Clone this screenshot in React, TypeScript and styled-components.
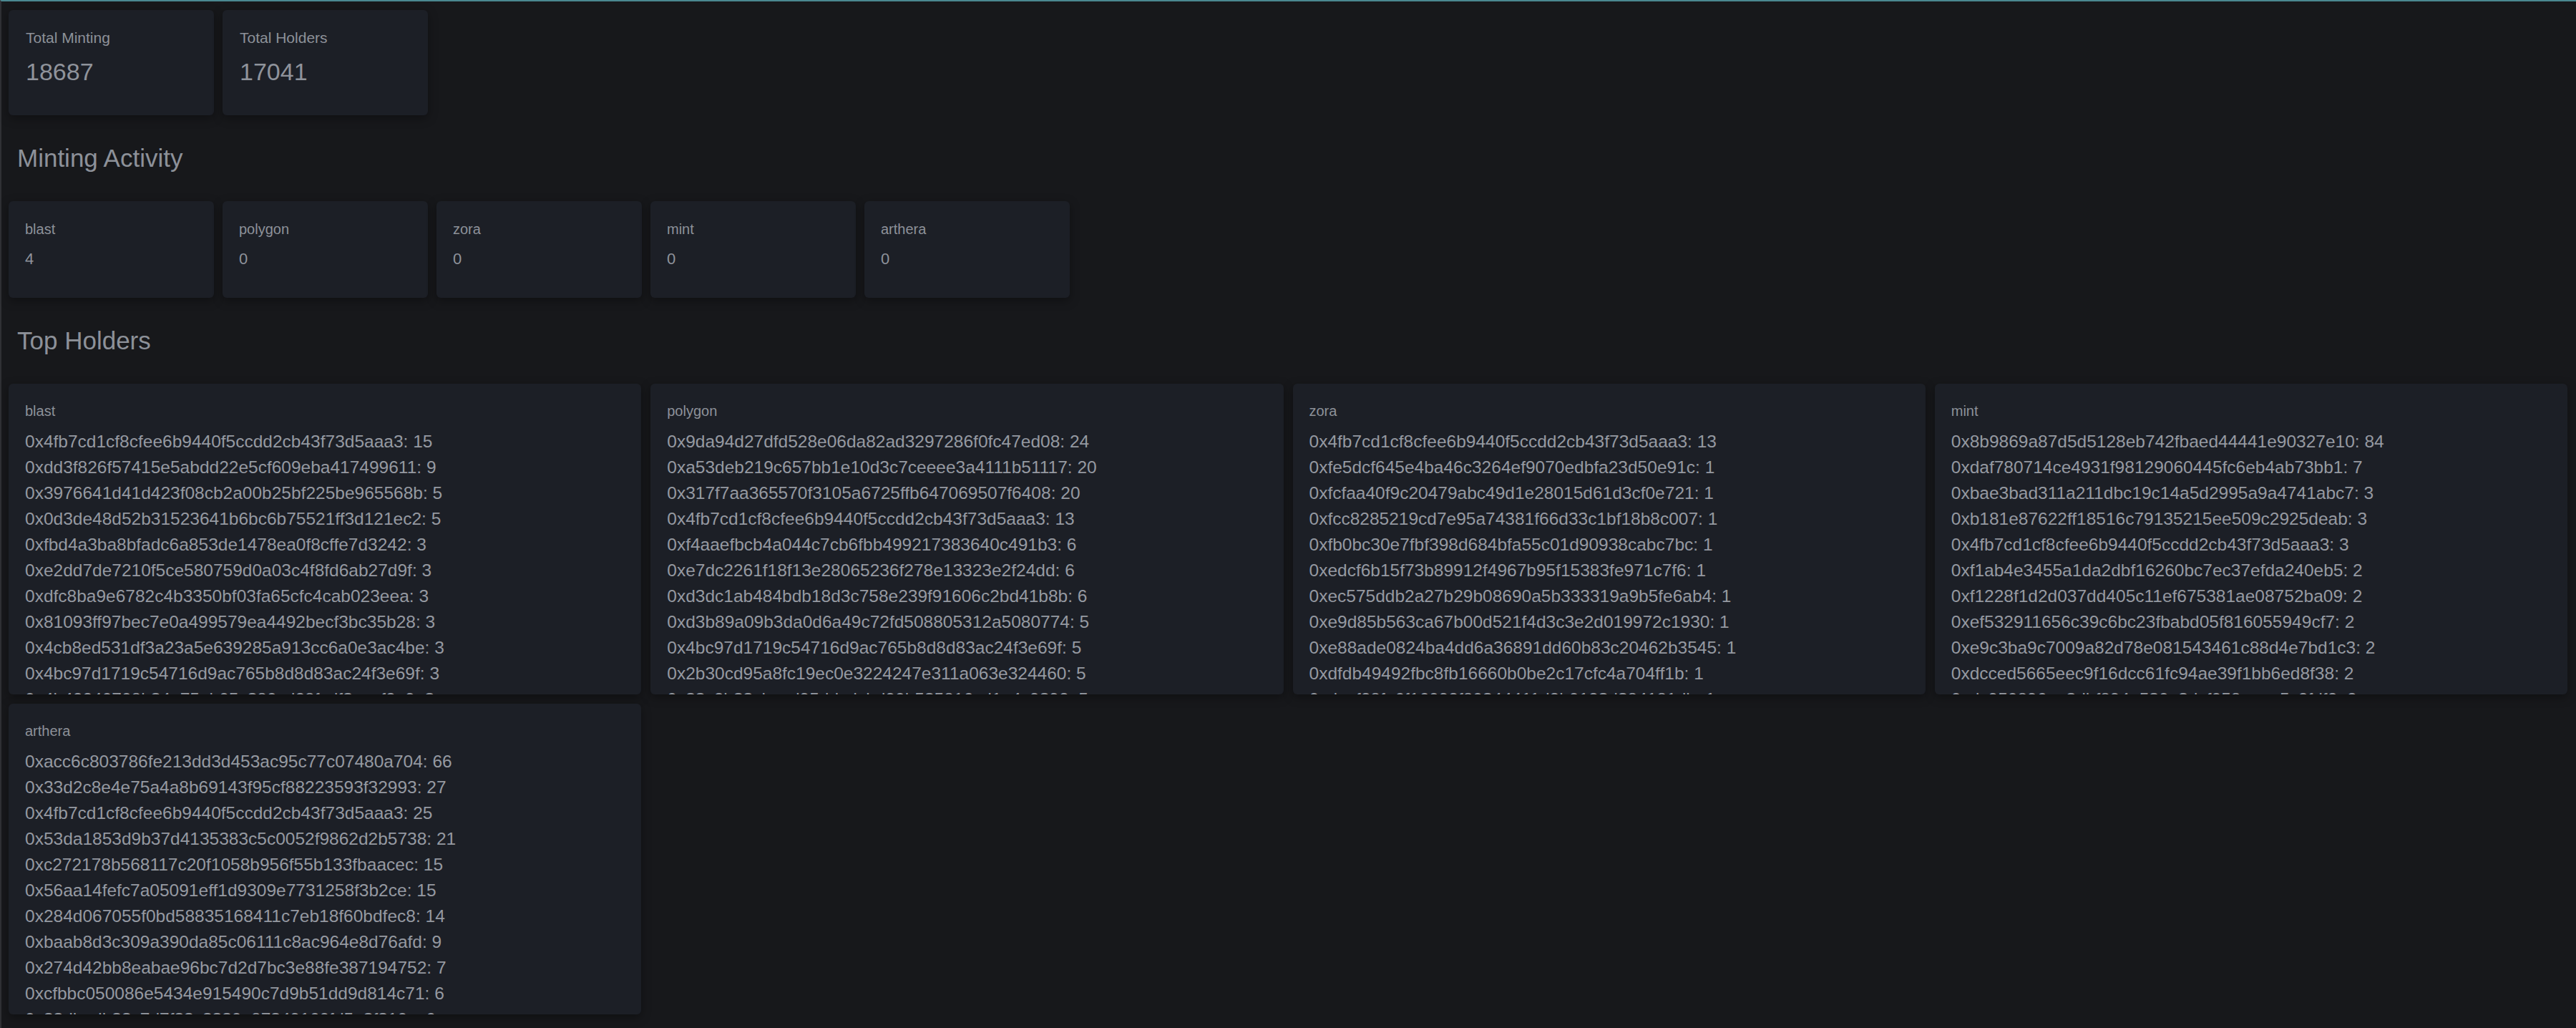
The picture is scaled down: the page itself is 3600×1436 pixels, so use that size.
import React from "react";
import styled, { createGlobalStyle } from "styled-components";

const GlobalStyle = createGlobalStyle`
  html, body {
    margin: 0;
    padding: 0;
    background: #17181b;
  }
  body {
    font-family: "Liberation Sans", Arial, Helvetica, sans-serif;
    color: #8d9199;
  }
  * { box-sizing: border-box; }
`;

const Page = styled.div`
  min-height: 100vh;
  background: #17181b;
  border-top: 2px solid #4a8891;
  border-left: 2px solid #303135;
  padding: 12px 12px 19px 10px;
`;

const CardRow = styled.div`
  display: flex;
  flex-wrap: wrap;
  gap: 12px;
`;

const Card = styled.div`
  background: #1c1f26;
  border-radius: 6px;
  box-shadow: 0 4px 14px rgba(0, 0, 0, 0.35);
`;

const StatCard = styled(Card)`
  width: 287px;
  padding: 27px 24px 41px;
  display: flex;
  flex-direction: column;
  gap: 16px;
`;

const StatLabel = styled.div`
  font-size: 21px;
  line-height: 24px;
  color: #8d9199;
`;

const StatValue = styled.div`
  font-size: 34px;
  line-height: 39px;
  color: #8f939b;
`;

const SectionTitle = styled.h2`
  margin: 40px 0 40px 12px;
  font-size: 35px;
  line-height: 40px;
  font-weight: 400;
  color: #8d9199;
`;

const ChainCard = styled(Card)`
  width: 287px;
  padding: 28px 23px 42px;
  display: flex;
  flex-direction: column;
  gap: 17px;
`;

const ChainLabel = styled.div`
  font-size: 20px;
  line-height: 23px;
  color: #8d9199;
`;

const ChainValue = styled.div`
  font-size: 22px;
  line-height: 25px;
  color: #8f939b;
`;

const HolderGrid = styled.div`
  display: grid;
  grid-template-columns: repeat(4, 1fr);
  gap: 13px;
`;

const HolderCard = styled(Card)`
  height: 434px;
  overflow: hidden;
  padding: 27px 23px 0;
`;

const HolderLabel = styled.div`
  font-size: 20px;
  line-height: 23px;
  margin-bottom: 13px;
  color: #8d9199;
`;

const HolderLine = styled.div`
  font-size: 24.5px;
  line-height: 36px;
  white-space: nowrap;
  color: #9599a1;
`;

const stats = [
  { label: "Total Minting", value: "18687" },
  { label: "Total Holders", value: "17041" },
];

const chains = [
  { label: "blast", value: "4" },
  { label: "polygon", value: "0" },
  { label: "zora", value: "0" },
  { label: "mint", value: "0" },
  { label: "arthera", value: "0" },
];

const holders: { chain: string; rows: [string, number][] }[] = [
  {
    chain: "blast",
    rows: [
      ["0x4fb7cd1cf8cfee6b9440f5ccdd2cb43f73d5aaa3", 15],
      ["0xdd3f826f57415e5abdd22e5cf609eba417499611", 9],
      ["0x3976641d41d423f08cb2a00b25bf225be965568b", 5],
      ["0x0d3de48d52b31523641b6bc6b75521ff3d121ec2", 5],
      ["0xfbd4a3ba8bfadc6a853de1478ea0f8cffe7d3242", 3],
      ["0xe2dd7de7210f5ce580759d0a03c4f8fd6ab27d9f", 3],
      ["0xdfc8ba9e6782c4b3350bf03fa65cfc4cab023eea", 3],
      ["0x81093ff97bec7e0a499579ea4492becf3bc35b28", 3],
      ["0x4cb8ed531df3a23a5e639285a913cc6a0e3ac4be", 3],
      ["0x4bc97d1719c54716d9ac765b8d8d83ac24f3e69f", 3],
      ["0x4b42240708b34a75eb05c380cd28fcdf3eacf2a9", 3],
    ],
  },
  {
    chain: "polygon",
    rows: [
      ["0x9da94d27dfd528e06da82ad3297286f0fc47ed08", 24],
      ["0xa53deb219c657bb1e10d3c7ceeee3a4111b51117", 20],
      ["0x317f7aa365570f3105a6725ffb647069507f6408", 20],
      ["0x4fb7cd1cf8cfee6b9440f5ccdd2cb43f73d5aaa3", 13],
      ["0xf4aaefbcb4a044c7cb6fbb499217383640c491b3", 6],
      ["0xe7dc2261f18f13e28065236f278e13323e2f24dd", 6],
      ["0xd3dc1ab484bdb18d3c758e239f91606c2bd41b8b", 6],
      ["0xd3b89a09b3da0d6a49c72fd508805312a5080774", 5],
      ["0x4bc97d1719c54716d9ac765b8d8d83ac24f3e69f", 5],
      ["0x2b30cd95a8fc19ec0e3224247e311a063e324460", 5],
      ["0x33c2b33cbcad95ddcdcbd90b535816cd1a4c9392", 5],
    ],
  },
  {
    chain: "zora",
    rows: [
      ["0x4fb7cd1cf8cfee6b9440f5ccdd2cb43f73d5aaa3", 13],
      ["0xfe5dcf645e4ba46c3264ef9070edbfa23d50e91c", 1],
      ["0xfcfaa40f9c20479abc49d1e28015d61d3cf0e721", 1],
      ["0xfcc8285219cd7e95a74381f66d33c1bf18b8c007", 1],
      ["0xfb0bc30e7fbf398d684bfa55c01d90938cabc7bc", 1],
      ["0xedcf6b15f73b89912f4967b95f15383fe971c7f6", 1],
      ["0xec575ddb2a27b29b08690a5b333319a9b5fe6ab4", 1],
      ["0xe9d85b563ca67b00d521f4d3c3e2d019972c1930", 1],
      ["0xe88ade0824ba4dd6a36891dd60b83c20462b3545", 1],
      ["0xdfdb49492fbc8fb16660b0be2c17cfc4a704ff1b", 1],
      ["0xdcef28fe6f16092f80344411d2b0123d384181db", 1],
    ],
  },
  {
    chain: "mint",
    rows: [
      ["0x8b9869a87d5d5128eb742fbaed44441e90327e10", 84],
      ["0xdaf780714ce4931f98129060445fc6eb4ab73bb1", 7],
      ["0xbae3bad311a211dbc19c14a5d2995a9a4741abc7", 3],
      ["0xb181e87622ff18516c79135215ee509c2925deab", 3],
      ["0x4fb7cd1cf8cfee6b9440f5ccdd2cb43f73d5aaa3", 3],
      ["0xf1ab4e3455a1da2dbf16260bc7ec37efda240eb5", 2],
      ["0xf1228f1d2d037dd405c11ef675381ae08752ba09", 2],
      ["0xef532911656c39c6bc23fbabd05f816055949cf7", 2],
      ["0xe9c3ba9c7009a82d78e081543461c88d4e7bd1c3", 2],
      ["0xdcced5665eec9f16dcc61fc94ae39f1bb6ed8f38", 2],
      ["0xdc950896ee3dbf894e530e3dcf058eeee5c2fdf2", 2],
    ],
  },
  {
    chain: "arthera",
    rows: [
      ["0xacc6c803786fe213dd3d453ac95c77c07480a704", 66],
      ["0x33d2c8e4e75a4a8b69143f95cf88223593f32993", 27],
      ["0x4fb7cd1cf8cfee6b9440f5ccdd2cb43f73d5aaa3", 25],
      ["0x53da1853d9b37d4135383c5c0052f9862d2b5738", 21],
      ["0xc272178b568117c20f1058b956f55b133fbaacec", 15],
      ["0x56aa14fefc7a05091eff1d9309e7731258f3b2ce", 15],
      ["0x284d067055f0bd58835168411c7eb18f60bdfec8", 14],
      ["0xbaab8d3c309a390da85c06111c8ac964e8d76afd", 9],
      ["0x274d42bb8eabae96bc7d2d7bc3e88fe387194752", 7],
      ["0xcfbbc050086e5434e915490c7d9b51dd9d814c71", 6],
      ["0x33dbedb33c7d7f33c3330e87349160fd5e3f310c", 6],
    ],
  },
];

export default function App() {
  return (
    <>
      <GlobalStyle />
      <Page>
        <CardRow>
          {stats.map((s) => (
            <StatCard key={s.label}>
              <StatLabel>{s.label}</StatLabel>
              <StatValue>{s.value}</StatValue>
            </StatCard>
          ))}
        </CardRow>

        <SectionTitle>Minting Activity</SectionTitle>
        <CardRow>
          {chains.map((c) => (
            <ChainCard key={c.label}>
              <ChainLabel>{c.label}</ChainLabel>
              <ChainValue>{c.value}</ChainValue>
            </ChainCard>
          ))}
        </CardRow>

        <SectionTitle>Top Holders</SectionTitle>
        <HolderGrid>
          {holders.map((h) => (
            <HolderCard key={h.chain}>
              <HolderLabel>{h.chain}</HolderLabel>
              {h.rows.map(([addr, n]) => (
                <HolderLine key={addr}>
                  {addr}: {n}
                </HolderLine>
              ))}
            </HolderCard>
          ))}
        </HolderGrid>
      </Page>
    </>
  );
}
